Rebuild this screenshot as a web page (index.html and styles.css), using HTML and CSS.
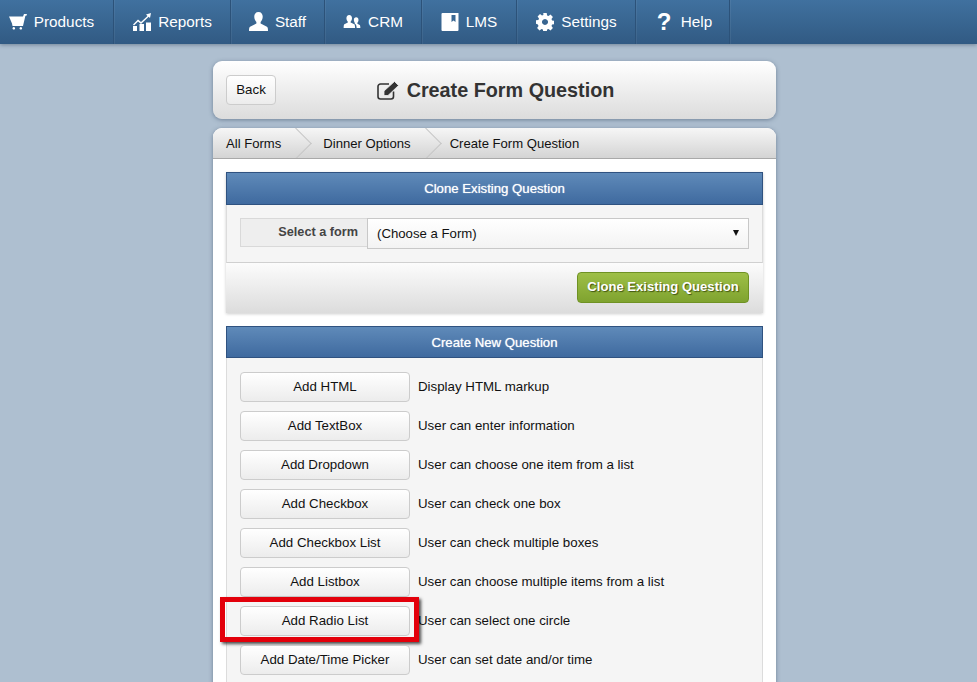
FILE: index.html
```html
<!DOCTYPE html>
<html lang="en">
<head>
<meta charset="utf-8">
<title>Create Form Question</title>
<link rel="stylesheet" href="styles.css">
</head>
<body>
<nav class="nav">
  <a class="nav-item w-products"><svg class="ico" viewBox="0 0 18 16"><path d="M0 2.500h14l1-2.500h3l-.6 1.800h-1L14 12H3.500L3 9.500 0 2.500z M4.800 13a1.300 1.300 0 1 0 .01 0z M11.800 13a1.300 1.300 0 1 0 .01 0z"/></svg>Products</a>
  <a class="nav-item w-reports"><svg class="ico ico-l" viewBox="0 0 18 18"><path d="M0 13h4v5H0z M6.500 11h4.500v7H6.500z M13 9.500h5V18h-5z M0 11.500l5-5 3 2.500L14.500 3 13 1.500 18 0l-1 5-1.300-1.300L8 11 5 8.500l-4 4z"/></svg>Reports</a>
  <a class="nav-item w-staff"><svg class="ico ico-xl" viewBox="0 0 18 18"><path d="M9 0c2.700 0 4 2 4 4.500 0 2-1 4-2 5v1.500l6 3c.7.400 1 1.500 1 4H0c0-2.500.3-3.600 1-4l6-3V9.500c-1-1-2-3-2-5C5 2 6.300 0 9 0z"/></svg>Staff</a>
  <a class="nav-item w-crm"><svg class="ico ico-s" viewBox="0 0 18 14"><path d="M6 0c2 0 3 1.500 3 3.500 0 1.500-.7 3-1.500 3.700V8l4 2c.5.300.8 1.500.8 4H0c0-2.500.3-3.700.8-4l3.700-2V7.200C3.700 6.500 3 5 3 3.500 3 1.500 4 0 6 0z M13.500 2.500c1.600 0 2.500 1.200 2.500 2.800 0 1.200-.5 2.300-1.200 3v1l2.500 1.400c.4.300.7 1.300.7 3.300h-4c0-2-.6-3.800-1.500-4.300l-.5-.300V8.300C11.500 7.600 11 6.500 11 5.300c0-1.600.9-2.800 2.500-2.800z"/></svg>CRM</a>
  <a class="nav-item w-lms"><svg class="ico ico-l" viewBox="0 0 17 18"><path fill-rule="evenodd" d="M1 0h16v17a1 1 0 0 1-1 1H1a1 1 0 0 1-1-1V1a1 1 0 0 1 1-1z M10 2v7l2-1.500L14 9V2z"/></svg>LMS</a>
  <a class="nav-item w-settings"><svg class="ico ico-l" viewBox="0 0 18 18"><path fill-rule="evenodd" d="M7.300 0h3.400l.4 2.400 1.400.6 2-1.400 2.400 2.400-1.400 2 .6 1.400 2.400.4v3.400l-2.400.4-.6 1.400 1.400 2-2.400 2.400-2-1.400-1.400.6-.4 2.400H7.300l-.4-2.400-1.400-.6-2 1.400-2.400-2.400 1.400-2-.6-1.400L0 10.700V7.300l2.400-.4.6-1.400-1.400-2L4 1.100l2 1.400 1.400-.6z M9 6a3 3 0 1 0 .01 0z"/></svg>Settings</a>
  <a class="nav-item w-help"><span class="q">?</span>Help</a>
</nav>

<main class="page">
  <header class="card title-card">
    <button class="btn back">Back</button>
    <h1 class="title"><svg class="edit" viewBox="0 0 22 19"><path class="edit-box" d="M16.500 10.500V15.500a2.500 2.500 0 0 1-2.500 2.500H3.500A2.500 2.500 0 0 1 1 15.500V5.500A2.500 2.500 0 0 1 3.500 3H12"/><path class="edit-pen" d="M7 10 17.500 .5 21.500 4.500 11 14.500H7z"/></svg>Create Form Question</h1>
  </header>

  <div class="card panel">
    <ol class="crumbs">
      <li class="crumb">All Forms</li>
      <li class="crumb">Dinner Options</li>
      <li class="crumb last">Create Form Question</li>
    </ol>
    <div class="panel-body">
      <section class="sect clone">
        <h2 class="sect-head">Clone Existing Question</h2>
        <div class="sect-body">
          <div class="field">
            <label class="field-label">Select a form</label>
            <div class="select">(Choose a Form)<span class="caret"></span></div>
          </div>
        </div>
        <div class="sect-foot"><button class="btn-green">Clone Existing Question</button></div>
      </section>

      <section class="sect">
        <h2 class="sect-head new">Create New Question</h2>
        <div class="sect-body list">
          <div class="row"><button class="btn add">Add HTML</button><span>Display HTML markup</span></div>
          <div class="row"><button class="btn add">Add TextBox</button><span>User can enter information</span></div>
          <div class="row"><button class="btn add">Add Dropdown</button><span>User can choose one item from a list</span></div>
          <div class="row"><button class="btn add">Add Checkbox</button><span>User can check one box</span></div>
          <div class="row"><button class="btn add">Add Checkbox List</button><span>User can check multiple boxes</span></div>
          <div class="row"><button class="btn add">Add Listbox</button><span>User can choose multiple items from a list</span></div>
          <div class="row"><button class="btn add">Add Radio List</button><span>User can select one circle</span><i class="highlight"></i></div>
          <div class="row"><button class="btn add">Add Date/Time Picker</button><span>User can set date and/or time</span></div>
        </div>
      </section>
    </div>
  </div>
</main>
</body>
</html>
```
FILE: styles.css
```css
* { box-sizing: border-box; }
html { overflow: hidden; }
body {
  margin: 0;
  background: #aebfd0;
  font-family: "Liberation Sans", Arial, sans-serif;
  font-size: 13.300px;
  color: #111;
}
.nav {
  display: flex;
  height: 44px;
  background: linear-gradient(#40719f, #315a83);
  box-shadow: 0 1px 4px rgba(40, 60, 85, .45);
}
.nav-item {
  display: flex;
  align-items: center;
  justify-content: center;
  gap: 7px;
  height: 44px;
  color: #fff;
  font-size: 15.300px;
  border-right: 1px solid #2c5279;
  box-shadow: 1px 0 0 rgba(255, 255, 255, .06);
  padding-bottom: 1px;
}
.w-products { width: 114px; padding-right: 10px; }
.w-reports { width: 117px; padding-left: 1px; }
.w-staff { width: 94px; }
.w-crm { width: 97px; }
.w-lms { width: 95px; }
.w-settings { width: 119px; padding-left: 1px; }
.w-help { width: 94px; padding-left: 4px; }
.ico { width: 18px; height: 16px; fill: #fff; flex: none; }
.ico-l { height: 18px; }
.ico-xl { height: 19px; width: 19px; }
.ico-s { height: 13px; width: 18px; }
.q { font-size: 24px; font-weight: bold; width: 14px; text-align: center; margin-right: 3px; line-height: 1; }

.page {
  width: 563px;
  margin: 17px 0 0 213px;
}
.card {
  border-radius: 9px;
  box-shadow: 0 1px 4px rgba(50, 70, 95, .5);
}
.title-card {
  position: relative;
  display: flex;
  align-items: center;
  justify-content: center;
  height: 58px;
  background: linear-gradient(#fff, #dcdcdc);
}
.btn {
  font: 13.300px "Liberation Sans", Arial, sans-serif;
  color: #111;
  background: linear-gradient(#fff, #ececec);
  border: 1px solid #ccc;
  border-radius: 4px;
  padding: 0 0 2px;
}
.back {
  position: absolute;
  left: 13px;
  top: 14px;
  width: 50px;
  height: 30px;
}
.title {
  display: flex;
  align-items: center;
  margin: 0;
  font-size: 19.800px;
  font-weight: bold;
  color: #333;
  transform: translateX(1px);
}
.edit { width: 22px; height: 19px; margin-right: 8px; }
.edit-box { fill: none; stroke: #333; stroke-width: 1.600; }
.edit-pen { fill: #333; stroke: #eee; stroke-width: .8; }

.panel {
  margin-top: 9px;
  overflow: hidden;
  background: #fff;
}
.crumbs {
  display: flex;
  height: 31px;
  margin: 0;
  padding: 0 0 0 13px;
  overflow: hidden;
  list-style: none;
  background: linear-gradient(#f6f6f6, #d4d4d4);
  border-bottom: 1px solid #a9a9a9;
}
.crumb {
  position: relative;
  display: flex;
  align-items: center;
  margin-right: 42px;
  font-size: 13.100px;
  color: #111;
}
.crumb.last { margin: 0 0 0 -3px; }
.crumb:not(.last)::after {
  content: "";
  position: absolute;
  right: -26px;
  top: 4px;
  width: 22px;
  height: 22px;
  transform: rotate(45deg);
  border-top: 1px solid #c6c6c6;
  border-right: 1px solid #c6c6c6;
}
.panel-body { padding: 13px 13px 0; }
.sect { margin-bottom: 13px; }
.sect.clone { box-shadow: 0 1px 3px rgba(0, 0, 0, .2); }
.sect-head {
  height: 33px;
  margin: 0;
  padding-bottom: 1px;
  display: flex;
  align-items: center;
  justify-content: center;
  font-size: 13.200px;
  font-weight: normal;
  color: #fff;
  text-shadow: 0 0 1px rgba(255, 255, 255, .8);
  background: linear-gradient(#5f8ab9, #3f6a9f);
  border: 1px solid #2f5280;
}
.sect-head.new { height: 32px; padding-bottom: 0; }
.sect-body {
  background: #f5f5f5;
  border: 1px solid #dcdcdc;
  border-bottom-color: #d0d0d0;
  border-top: 0;
  padding: 13px;
}
.field { display: flex; height: 31px; }
.field-label {
  width: 127px;
  height: 29px;
  background: #eee;
  border: 1px solid #d9d9d9;
  border-right: 0;
  text-align: right;
  padding: 6px 9px 0 0;
  font-size: 12.700px;
  font-weight: bold;
  color: #444;
}
.select {
  position: relative;
  flex: 1;
  background: linear-gradient(#fff, #f3f3f3);
  border: 1px solid #c8c8c8;
  padding: 7px 9px;
  font-size: 13.200px;
  color: #111;
}
.caret {
  position: absolute;
  right: 9px;
  top: 11px;
  border: 3.500px solid transparent;
  border-top: 6px solid #111;
  border-bottom: 0;
}
.sect-foot {
  display: flex;
  justify-content: flex-end;
  align-items: center;
  height: 50px;
  padding: 0 14px 2px 0;
  background: linear-gradient(#fcfcfc, #dcdcdc);
}
.btn-green {
  width: 172px;
  height: 31px;
  padding: 0 0 2px;
  font: bold 13.100px "Liberation Sans", Arial, sans-serif;
  color: #fff;
  background: linear-gradient(#9ebf47, #7fa32f);
  border: 1px solid #6f9224;
  border-radius: 4px;
  text-shadow: 1px 1px 1px #3f5410;
}
.list { padding: 14px 13px 0; }
.row {
  position: relative;
  display: flex;
  align-items: center;
  gap: 8px;
  height: 30px;
  margin-bottom: 9px;
  color: #111;
}
.row span { padding-bottom: 2px; }
.add { width: 170px; height: 30px; }
.highlight {
  position: absolute;
  left: -20px;
  top: -9px;
  width: 199px;
  height: 45px;
  border: 5px solid #e3000b;
  box-shadow: 2px 2px 3px rgba(0, 0, 0, .7);
}
```
